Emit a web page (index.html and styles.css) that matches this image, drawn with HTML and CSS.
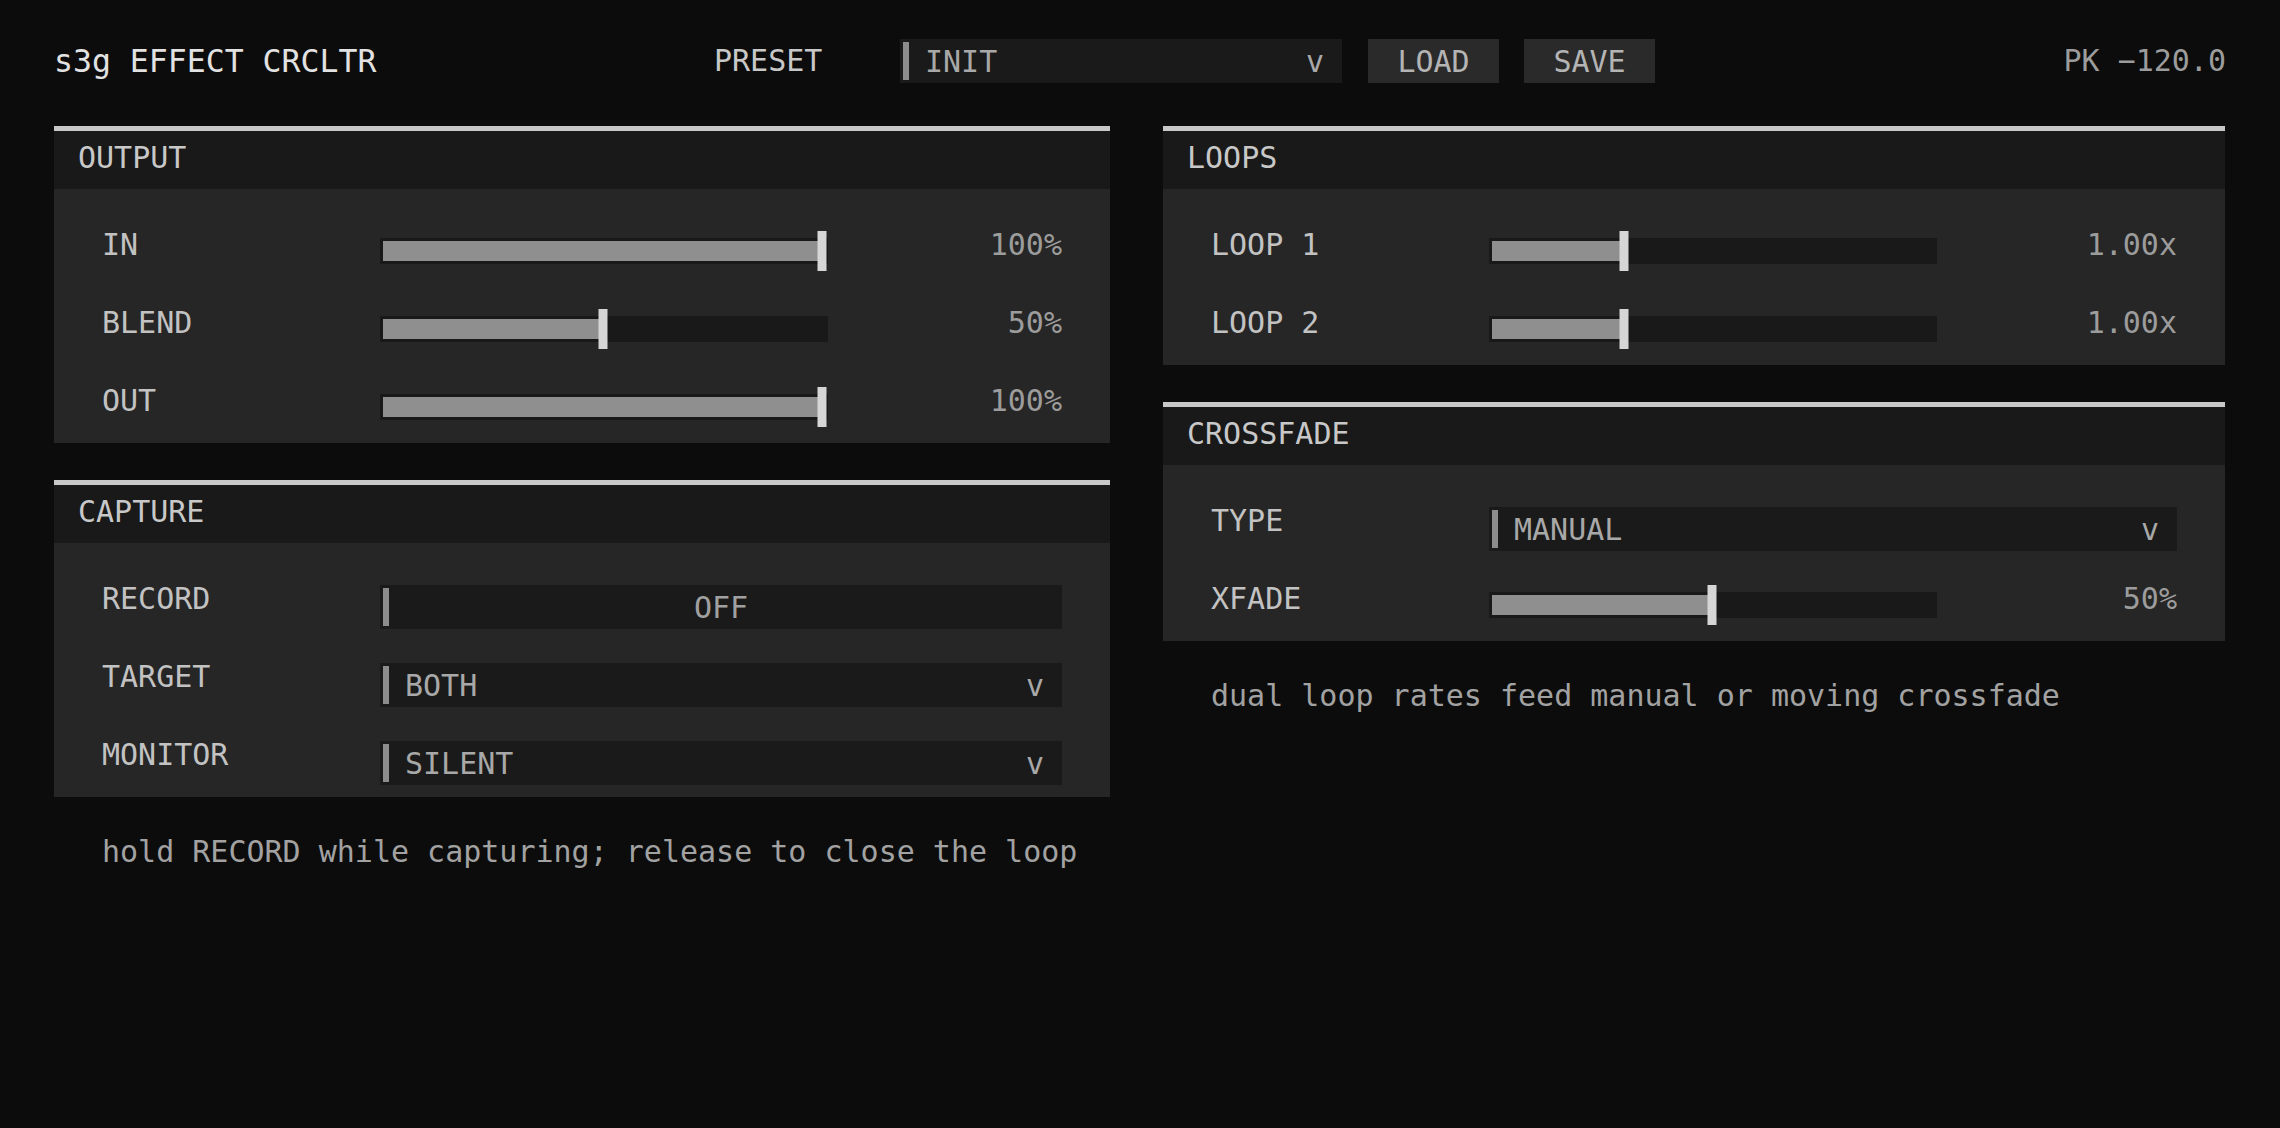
FILE: index.html
```html
<!DOCTYPE html>
<html>
<head>
<meta charset="utf-8">
<title>s3g EFFECT CRCLTR</title>
<link rel="stylesheet" href="styles.css">
</head>
<body>
<div class="app">
  <header class="topbar">
    <div class="title">s3g EFFECT CRCLTR</div>
    <div class="preset-label">PRESET</div>
    <div class="select preset-select"><span class="accent"></span><span class="select-text">INIT</span><span class="caret">v</span></div>
    <div class="btn">LOAD</div>
    <div class="btn">SAVE</div>
    <div class="spacer"></div>
    <div class="peak">PK −120.0</div>
  </header>

  <main class="columns">
    <div class="column">
      <section class="panel">
        <div class="panel-head">OUTPUT</div>
        <div class="panel-body">
          <div class="row">
            <div class="label">IN</div>
            <div class="slider-ctl">
              <div class="track"><div class="fill" style="width:100%"></div><div class="rail"><div class="thumb" style="left:100%"></div></div></div>
              <div class="value">100%</div>
            </div>
          </div>
          <div class="row">
            <div class="label">BLEND</div>
            <div class="slider-ctl">
              <div class="track"><div class="fill" style="width:50%"></div><div class="rail"><div class="thumb" style="left:50%"></div></div></div>
              <div class="value">50%</div>
            </div>
          </div>
          <div class="row">
            <div class="label">OUT</div>
            <div class="slider-ctl">
              <div class="track"><div class="fill" style="width:100%"></div><div class="rail"><div class="thumb" style="left:100%"></div></div></div>
              <div class="value">100%</div>
            </div>
          </div>
        </div>
      </section>

      <section class="panel">
        <div class="panel-head">CAPTURE</div>
        <div class="panel-body">
          <div class="row">
            <div class="label">RECORD</div>
            <div class="select toggle"><span class="accent"></span><span class="toggle-text">OFF</span></div>
          </div>
          <div class="row">
            <div class="label">TARGET</div>
            <div class="select"><span class="accent"></span><span class="select-text">BOTH</span><span class="caret">v</span></div>
          </div>
          <div class="row">
            <div class="label">MONITOR</div>
            <div class="select"><span class="accent"></span><span class="select-text">SILENT</span><span class="caret">v</span></div>
          </div>
        </div>
      </section>

      <p class="note">hold RECORD while capturing; release to close the loop</p>
    </div>

    <div class="column">
      <section class="panel">
        <div class="panel-head">LOOPS</div>
        <div class="panel-body">
          <div class="row">
            <div class="label">LOOP 1</div>
            <div class="slider-ctl">
              <div class="track"><div class="fill" style="width:30%"></div><div class="rail"><div class="thumb" style="left:30%"></div></div></div>
              <div class="value">1.00x</div>
            </div>
          </div>
          <div class="row">
            <div class="label">LOOP 2</div>
            <div class="slider-ctl">
              <div class="track"><div class="fill" style="width:30%"></div><div class="rail"><div class="thumb" style="left:30%"></div></div></div>
              <div class="value">1.00x</div>
            </div>
          </div>
        </div>
      </section>

      <section class="panel">
        <div class="panel-head">CROSSFADE</div>
        <div class="panel-body">
          <div class="row">
            <div class="label">TYPE</div>
            <div class="select"><span class="accent"></span><span class="select-text">MANUAL</span><span class="caret">v</span></div>
          </div>
          <div class="row">
            <div class="label">XFADE</div>
            <div class="slider-ctl">
              <div class="track"><div class="fill" style="width:50%"></div><div class="rail"><div class="thumb" style="left:50%"></div></div></div>
              <div class="value">50%</div>
            </div>
          </div>
        </div>
      </section>

      <p class="note">dual loop rates feed manual or moving crossfade</p>
    </div>
  </main>
</div>
</body>
</html>
```

FILE: styles.css
```css
* {
  box-sizing: border-box;
}

html, body {
  margin: 0;
  padding: 0;
  background: #0c0c0c;
}

body {
  font-family: "DejaVu Sans Mono", "Liberation Mono", monospace;
  font-size: 30px;
  color: #c4c4c4;
}

.app {
  padding: 39px 54px 0 54px;
}

/* top bar */
.topbar {
  display: flex;
  align-items: center;
  height: 44px;
}

.title {
  flex: 0 0 660px;
  font-size: 31.5px;
  color: #e2e2e2;
  line-height: 44px;
}

.preset-label {
  flex: 0 0 186px;
  color: #c8c8c8;
  line-height: 44px;
}

.btn {
  flex: 0 0 131px;
  height: 44px;
  margin-left: 26px;
  background: #2a2a2a;
  color: #b4b4b4;
  display: flex;
  align-items: center;
  justify-content: center;
}

.btn + .btn {
  margin-left: 25px;
}

.spacer {
  flex: 1 1 auto;
}

.peak {
  color: #9c9c9c;
  line-height: 44px;
}

/* columns */
.columns {
  display: grid;
  grid-template-columns: 1056px 1062px;
  column-gap: 53px;
  margin-top: 43px;
  align-items: start;
}

.column {
  display: flex;
  flex-direction: column;
  gap: 37px;
}

.panel {
  border-top: 5px solid #c8c8c8;
}

.panel-head {
  height: 58px;
  background: #191919;
  padding: 0 24px 5px 24px;
  display: flex;
  align-items: center;
  line-height: 28px;
  color: #c8c8c8;
}

.panel-body {
  background: #262626;
  padding: 42px 48px 0 48px;
  display: flex;
  flex-direction: column;
  gap: 22px;
}

.row {
  height: 56px;
  display: flex;
  align-items: flex-start;
}

.label {
  flex: 0 0 278px;
  line-height: 28px;
  color: #c2c2c2;
}

/* slider */
.slider-ctl {
  flex: 1 1 auto;
  display: flex;
  align-items: flex-start;
}

.track {
  position: relative;
  flex: 0 0 448px;
  height: 26px;
  margin-top: 7px;
  background: #191919;
  padding: 3px;
}

.fill {
  height: 20px;
  background: #8f8f8f;
}

.rail {
  position: absolute;
  top: -7px;
  left: 3.5px;
  width: 438px;
  height: 40px;
}

.thumb {
  position: absolute;
  top: 0;
  width: 9px;
  height: 40px;
  background: #d6d6d6;
  transform: translateX(-50%);
}

.value {
  flex: 1 1 auto;
  text-align: right;
  color: #9c9c9c;
  line-height: 28px;
}

/* select */
.select {
  flex: 1 1 auto;
  height: 44px;
  background: #1a1a1a;
  padding: 3px 18px 3px 3px;
  display: flex;
  align-items: stretch;
}

.select.preset-select {
  flex: 0 0 442px;
}

.accent {
  flex: 0 0 6px;
  background: #8c8c8c;
}

.select-text {
  flex: 1 1 auto;
  padding-left: 16px;
  display: flex;
  align-items: center;
  color: #a8a8a8;
}

.caret {
  display: flex;
  align-items: center;
  color: #a8a8a8;
}

.select.toggle {
  padding-right: 9px;
}

.toggle-text {
  flex: 1 1 auto;
  display: flex;
  align-items: center;
  justify-content: center;
  color: #a0a0a0;
}

/* notes */
.note {
  margin: 0;
  padding-left: 48px;
  line-height: 36px;
  color: #a2a2a2;
}
```
